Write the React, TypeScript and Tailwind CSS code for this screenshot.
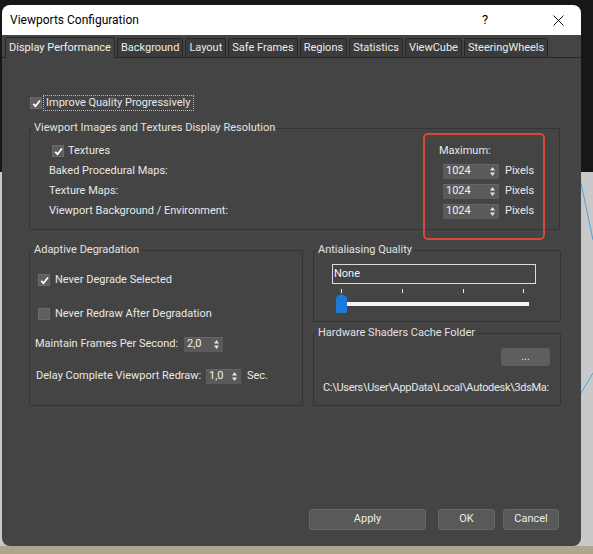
import type { ReactNode } from "react";

const tabs = [
  "Display Performance",
  "Background",
  "Layout",
  "Safe Frames",
  "Regions",
  "Statistics",
  "ViewCube",
  "SteeringWheels",
];

function Check({ on }: { on?: boolean }) {
  return (
    <span className="flex h-[12px] w-[12px] shrink-0 items-center justify-center border border-[#6a6a6a] bg-[#5e5e5e]">
      {on && (
        <svg viewBox="0 0 10 10" className="h-[9px] w-[9px]">
          <path d="M1.3 5.3 L3.9 8 L8.8 1.6" stroke="#fff" strokeWidth="2" fill="none" />
        </svg>
      )}
    </span>
  );
}

function Spinner({ value, w }: { value: string; w: string }) {
  return (
    <div
      className={`flex h-[15px] ${w} shrink-0 items-center justify-between border-t border-[#666] bg-[#5a5a5a] pl-[3px] pr-[4px] text-[11px] text-[#f0f0f0]`}
    >
      <span>{value}</span>
      <svg width="5" height="9" viewBox="0 0 5 9">
        <path d="M2.5 0 L5 3.5 H0Z M0 5.5 H5 L2.5 9Z" fill="#e6e6e6" />
      </svg>
    </div>
  );
}

function Group({
  title,
  className,
  children,
}: {
  title: string;
  className?: string;
  children: ReactNode;
}) {
  return (
    <fieldset className={`min-w-0 rounded-[2px] border border-[#333333] ${className ?? ""}`}>
      <legend className="ml-[2px] px-[2px] leading-[16px] text-[#e2e2e2]">{title}</legend>
      {children}
    </fieldset>
  );
}

export default function App() {
  return (
    <div className="flex h-[554px] w-[593px] overflow-hidden bg-[linear-gradient(to_bottom,#171717_0_172px,#c9c9c9_172px_546px,#b1a48f_546px)] pl-[2px] pt-[5px] font-['Roboto',sans-serif] text-[11px] text-[#e8e8e8]">
      {/* dialog */}
      <div className="relative flex h-[541px] w-[579px] shrink-0 flex-col overflow-hidden rounded-[8px] bg-[#444444]">
        <div className="flex h-[30px] shrink-0 items-center bg-white pl-[8px] text-[12px] text-black">
          <span>Viewports Configuration</span>
          <span className="ml-auto w-[46px] text-center text-[13px]">?</span>
          <span className="ml-[27px] flex w-[46px] justify-center">
            <svg width="11" height="11" viewBox="0 0 11 11">
              <path d="M0.5 0.5 L10.5 10.5 M10.5 0.5 L0.5 10.5" stroke="#111" strokeWidth="1" />
            </svg>
          </span>
        </div>

        {/* tabs */}
        <div className="flex h-[23px] shrink-0 items-end whitespace-nowrap border-b border-[#262626] pl-[3px]">
          {tabs.map((t, i) =>
            i === 0 ? (
              <div
                key={t}
                className="mb-[-1px] flex h-[21px] items-center rounded-t-[2px] border border-b-0 border-[#262626] bg-[#444444] px-[3px] text-[#f0f0f0]"
              >
                {t}
              </div>
            ) : (
              <div
                key={t}
                className="ml-[2px] flex h-[19px] items-center rounded-t-[2px] border border-b-0 border-[#262626] bg-[#3b3b3b] px-[3px] text-[#ececec]"
              >
                {t}
              </div>
            )
          )}
        </div>

        <div className="flex flex-col pl-[27px]">
          {/* improve quality */}
          <div className="ml-[1px] mt-[37px] flex h-[16px] items-center gap-[1px]">
            <Check on />
            <span className="flex h-[16px] items-center border border-dotted border-[#bdbdbd] pl-[2px] pr-[3px]">
              Improve Quality Progressively
            </span>
          </div>

          <Group title="Viewport Images and Textures Display Resolution" className="mt-[9px] w-[531px] pb-[8px]">
            <div className="mt-[5px] flex">
              <div className="flex flex-1 flex-col pl-[19px]">
                <div className="flex h-[20px] items-center gap-[4px] pl-[3px]">
                  <Check on />
                  <span>Textures</span>
                </div>
                <div className="flex h-[20px] items-center">Baked Procedural Maps:</div>
                <div className="flex h-[20px] items-center">Texture Maps:</div>
                <div className="flex h-[20px] items-center">Viewport Background / Environment:</div>
              </div>
              <div className="flex w-[120px] flex-col">
                <div className="flex h-[20px] items-center">Maximum:</div>
                {[0, 1, 2].map((k) => (
                  <div key={k} className="flex h-[20px] items-center gap-[6px] pl-[4px]">
                    <Spinner value="1024" w="w-[56px]" />
                    <span>Pixels</span>
                  </div>
                ))}
              </div>
            </div>
          </Group>

          <div className="mt-[12px] flex gap-[10px]">
            <Group title="Adaptive Degradation" className="h-[164px] w-[274px]">
              <div className="ml-[8px] mt-[14px] flex h-[16px] items-center gap-[5px]">
                <Check on />
                <span>Never Degrade Selected</span>
              </div>
              <div className="ml-[8px] mt-[18px] flex h-[16px] items-center gap-[5px]">
                <Check />
                <span>Never Redraw After Degradation</span>
              </div>
              <div className="ml-[5px] mt-[14px] flex h-[16px] items-center whitespace-nowrap">
                <span className="w-[149px]">Maintain Frames Per Second:</span>
                <Spinner value="2,0" w="w-[39px]" />
              </div>
              <div className="ml-[6px] mt-[16px] flex h-[16px] items-center whitespace-nowrap">
                <span className="w-[170px]">Delay Complete Viewport Redraw:</span>
                <Spinner value="1,0" w="w-[35px]" />
                <span className="ml-[6px]">Sec.</span>
              </div>
            </Group>

            <div className="flex w-[248px] flex-col gap-[3px]">
              <Group title="Antialiasing Quality" className="h-[80px] w-[248px]">
                <div className="ml-[18px] mt-[6px] flex h-[20px] w-[204px] items-center border border-[#dcdcdc] pl-[1px] text-[#f2f2f2]">
                  None
                </div>
                <svg className="ml-[20px] mt-[4px]" width="200" height="26" viewBox="0 0 200 26">
                  <rect x="7" y="1" width="1" height="4" fill="#e8e8e8" />
                  <rect x="68" y="1" width="1" height="4" fill="#e8e8e8" />
                  <rect x="129" y="1" width="1" height="4" fill="#e8e8e8" />
                  <rect x="189" y="1" width="1" height="4" fill="#e8e8e8" />
                  <rect x="12" y="14" width="183" height="4" fill="#f4f4f4" />
                  <path d="M2 24 V10.5 Q2 9 3.5 8 L7.5 6 L11.5 8 Q13 9 13 10.5 V24 Q13 25 12 25 H3 Q2 25 2 24Z" fill="#1d79d9" />
                </svg>
              </Group>
              <Group title="Hardware Shaders Cache Folder" className="h-[81px] w-[248px]">
                <div className="flex justify-end pr-[10px]">
                  <div className="mt-[7px] flex h-[18px] w-[49px] items-center justify-center rounded-[3px] bg-[#5e5e5e] text-[#e8e8e8]">
                    ...
                  </div>
                </div>
                <div className="mt-[14px] flex h-[16px] items-center whitespace-nowrap pl-[9px] tracking-[-0.3px]">
                  C:\Users\User\AppData\Local\Autodesk\3dsMa:
                </div>
              </Group>
            </div>
          </div>
        </div>

        {/* footer buttons */}
        <div className="mt-auto flex justify-end pb-[16px] pr-[22px]">
          <button className="flex h-[21px] w-[117px] items-center justify-center rounded-[3px] border border-[#666] bg-[#595959] text-[#ececec]">
            Apply
          </button>
          <button className="ml-[12px] flex h-[21px] w-[57px] items-center justify-center rounded-[3px] border border-[#666] bg-[#595959] text-[#ececec]">
            OK
          </button>
          <button className="ml-[8px] flex h-[21px] w-[56px] items-center justify-center rounded-[3px] border border-[#666] bg-[#595959] text-[#ececec]">
            Cancel
          </button>
        </div>

        {/* red annotation */}
        <div className="pointer-events-none absolute left-[421px] top-[128px] h-[107px] w-[122px] rounded-[5px] border-2 border-[#d6473c]" />
      </div>

      <svg className="shrink-0" width="12" height="549" viewBox="0 0 12 549">
        <path d="M0 178 L12 235" stroke="#4fa3d6" strokeWidth="1" fill="none" />
        <path d="M0 388 L12 368" stroke="#4fa3d6" strokeWidth="1" fill="none" />
      </svg>
    </div>
  );
}
